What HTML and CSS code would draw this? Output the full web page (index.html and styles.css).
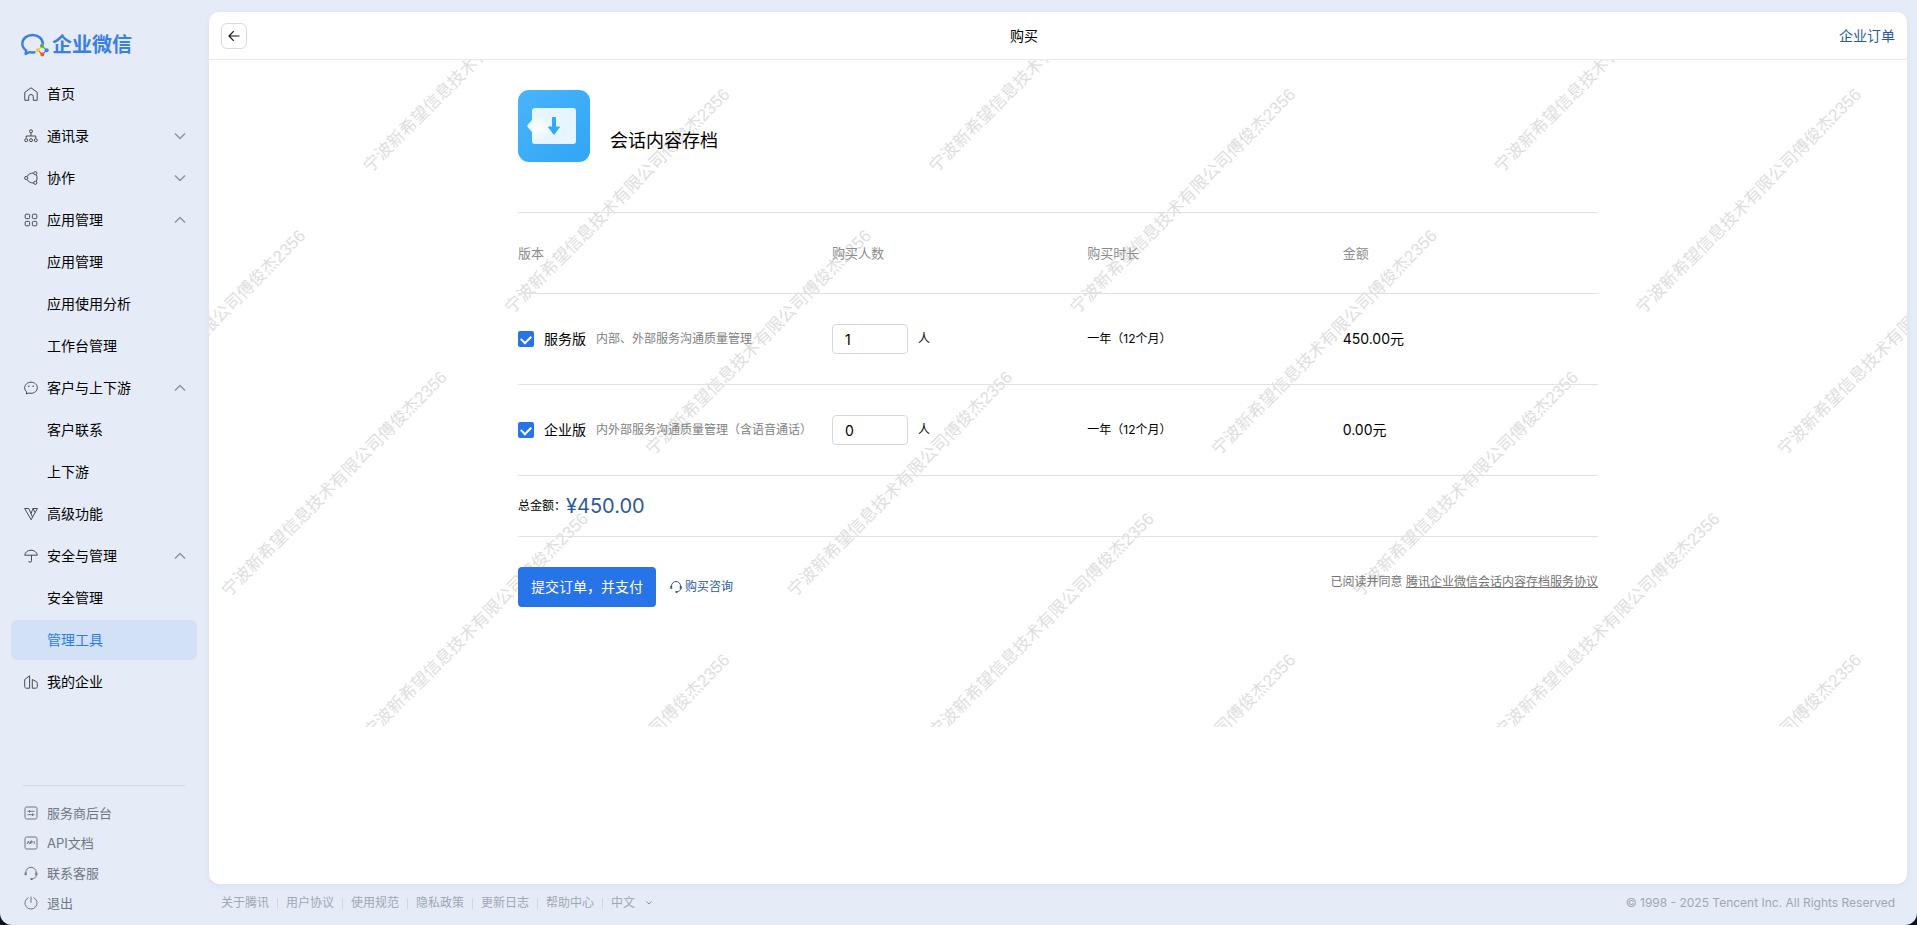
FILE: index.html
```html
<!DOCTYPE html>
<html lang="zh-CN">
<head>
  <meta charset="UTF-8" />
  <meta name="viewport" content="width=device-width, initial-scale=1.0"/>
  <title>企业微信</title>
  <link rel="stylesheet" href="styles.css">
</head>
<body>
  <aside class="sidebar">
    <a class="logo" href="#">
      <svg width="28" height="24" viewBox="0 0 28 24" fill="none">
        <path d="M22 11.5C21.8 5.500 17.200 2 11.500 2 5.800 2 1.300 5.700 1.300 10.600c0 2.900 1.500 5.300 3.900 6.900L4.600 21l3.900-1.900c2.100.5 4.100.5 5.900.1" stroke="#3a7fe6" stroke-width="2.400" stroke-linejoin="round"/>
        <path d="M21 13l4.600 4.200" stroke="#53b13c" stroke-width="1.200"/>
        <path d="M25.600 17.200l-4.200 4.300" stroke="#3a7fe6" stroke-width="1.200"/>
        <path d="M21.400 21.500l-4.400-4.200" stroke="#ec5a29" stroke-width="1.200"/>
        <path d="M17 17.300l4-4.300" stroke="#f6c445" stroke-width="1.200"/>
        <circle cx="21" cy="12.800" r="2" fill="#53b13c"/>
        <circle cx="25.700" cy="17.200" r="2" fill="#3a7fe6"/>
        <circle cx="21.300" cy="21.600" r="2" fill="#ec5a29"/>
        <circle cx="16.800" cy="17.300" r="2" fill="#f6c445"/>
      </svg>
      <span>企业微信</span>
    </a>

    <nav class="menu">
      <a class="menu-item" href="#">
        <svg class="icon" viewBox="0 0 14 14"><path d="M.8 5.300L7 .8l6.200 4.500v8H9.300V9.800a2.300 2.300 0 0 0-4.600 0v3.500H.8z"/></svg>
        首页
      </a>
      <button class="menu-item">
        <svg class="icon" viewBox="0 0 14 14"><circle cx="7" cy="2.300" r="1.500"/><path d="M7 4v3M2.200 9V7h9.600v2"/><circle cx="2.200" cy="11.200" r="1.500"/><circle cx="7" cy="11.200" r="1.500"/><circle cx="11.800" cy="11.200" r="1.500"/></svg>
        通讯录
        <svg class="arrow" viewBox="0 0 12 12"><path d="M1 3.500l5 5 5-5"/></svg>
      </button>
      <button class="menu-item">
        <svg class="icon" viewBox="0 0 14 14"><circle cx="2.200" cy="7" r="1.600"/><circle cx="11.300" cy="2.200" r="1.600"/><circle cx="11.300" cy="11.800" r="1.600"/><path d="M3 5.500C4.300 3.300 6.500 2 9.700 2M3 8.500c1.300 2.200 3.500 3.500 6.700 3.500M12.300 3.600c1 2.200 1 4.600 0 6.800"/></svg>
        协作
        <svg class="arrow" viewBox="0 0 12 12"><path d="M1 3.500l5 5 5-5"/></svg>
      </button>
      <button class="menu-item">
        <svg class="icon" viewBox="0 0 14 14"><rect x="1.200" y="1.200" width="4.400" height="4.400" rx="1"/><rect x="8.400" y="1.200" width="4.400" height="4.400" rx="1"/><rect x="1.200" y="8.400" width="4.400" height="4.400" rx="1"/><rect x="8.400" y="8.400" width="4.400" height="4.400" rx="1"/></svg>
        应用管理
        <svg class="arrow" viewBox="0 0 12 12"><path d="M1 8.500l5-5 5 5"/></svg>
      </button>
      <a class="menu-item sub" href="#">应用管理</a>
      <a class="menu-item sub" href="#">应用使用分析</a>
      <a class="menu-item sub" href="#">工作台管理</a>
      <button class="menu-item">
        <svg class="icon" viewBox="0 0 14 14"><path d="M7 1.200c3.500 0 6.300 2.400 6.300 5.600S10.500 12.300 7 12.300c-.8 0-1.500-.1-2.200-.3L2.400 13l.2-2.200C1.400 9.800.7 8.400.7 6.800.7 3.600 3.500 1.200 7 1.200z"/><circle class="dot" cx="4.800" cy="5.200" r=".8"/><circle class="dot" cx="9.200" cy="5.200" r=".8"/></svg>
        客户与上下游
        <svg class="arrow" viewBox="0 0 12 12"><path d="M1 8.500l5-5 5 5"/></svg>
      </button>
      <a class="menu-item sub" href="#">客户联系</a>
      <a class="menu-item sub" href="#">上下游</a>
      <a class="menu-item" href="#">
        <svg class="icon" viewBox="0 0 14 14"><path d="M.6 1.500h4.200l3.700 8.600-1.300 2.700zM7 6.500l2-5h4.500L8.500 10.100M9 1.500l1.900 4"/></svg>
        高级功能
      </a>
      <button class="menu-item">
        <svg class="icon" viewBox="0 0 14 14"><path d="M.7 6.200C1.200 3.200 3.700 1.200 7 1.200s5.800 2 6.300 5zM7.500 6.200v5.600c0 .9-.6 1.500-1.400 1.500s-1.300-.4-1.300-1.200"/></svg>
        安全与管理
        <svg class="arrow" viewBox="0 0 12 12"><path d="M1 8.500l5-5 5 5"/></svg>
      </button>
      <a class="menu-item sub" href="#">安全管理</a>
      <a class="menu-item sub active" href="#">管理工具</a>
      <a class="menu-item" href="#">
        <svg class="icon" viewBox="0 0 14 14"><path d="M5.600.8v12.400H2.300c-.9 0-1.600-.7-1.600-1.600V4.500zM8.300 4.500l3.600 1.800c.9.400 1.400 1 1.400 2v3.400c0 .9-.6 1.500-1.500 1.500H8.300z"/></svg>
        我的企业
      </a>
    </nav>

    <div class="side-links">
      <a href="#">
        <svg class="icon" viewBox="0 0 14 14"><rect x="1" y="1" width="12" height="12" rx="1.500"/><path d="M3.500 5.300h7M3.500 8.700h7M5.500 4v2.600M8.500 7.400V10"/></svg>
        服务商后台
      </a>
      <a href="#">
        <svg class="icon" viewBox="0 0 14 14"><rect x="1" y="1" width="12" height="12" rx="1.500"/><path d="M3.200 8l1.200-3 1.200 3M6.700 8V5h1.400v1.600H6.700M10.200 5v3"/></svg>
        API文档
      </a>
      <a href="#">
        <svg class="icon" viewBox="0 0 14 14"><path d="M1.800 9V6.500a5.200 5.200 0 0 1 10.400 0V9c0 2.200-1.500 3.700-4.400 3.900"/><path class="thick" d="M1.600 6.500v2.700M12.400 6.500v2.700M6.500 13h2"/></svg>
        联系客服
      </a>
      <a href="#">
        <svg class="icon" viewBox="0 0 14 14"><path d="M4.500 1.600a6 6 0 1 0 5 0M7 .6v6.200"/></svg>
        退出
      </a>
    </div>
  </aside>

  <div class="page">
    <main class="card">
      <header class="card-head">
        <button class="back" aria-label="返回">
          <svg width="12" height="12" viewBox="0 0 12 12"><path d="M11.500 6H1M5.700 1.200L1 6l4.700 4.800"/></svg>
        </button>
        <h1>购买</h1>
        <a href="#">企业订单</a>
      </header>

      <section class="content">
        <div class="watermark" id="watermark" aria-hidden="true"></div>

        <form class="order">
          <div class="app">
            <svg width="72" height="72" viewBox="0 0 72 72">
              <defs>
                <linearGradient id="appBg" x1="0" y1="0" x2="1" y2="1">
                  <stop offset="0" stop-color="#49b4fb"/>
                  <stop offset="1" stop-color="#30a6f5"/>
                </linearGradient>
                <radialGradient id="appGlow" cx="20" cy="38" r="13" gradientUnits="userSpaceOnUse">
                  <stop offset="0" stop-color="#fff"/>
                  <stop offset="1" stop-color="#e6f5fe"/>
                </radialGradient>
              </defs>
              <rect width="72" height="72" rx="11" fill="url(#appBg)"/>
              <path d="M17 18h38a3 3 0 0 1 3 3v30a3 3 0 0 1-3 3H17a3 3 0 0 1-3-3v-9l-4-4.500a2 2 0 0 1 0-3l4-4.500v-9a3 3 0 0 1 3-3z" fill="url(#appGlow)"/>
              <path d="M34.500 27.500h3V37h4L36 44.500 30.500 37h4z" fill="#34aaf6" stroke="#34aaf6" stroke-linejoin="round"/>
            </svg>
            <h2>会话内容存档</h2>
          </div>

          <table class="versions">
            <thead>
              <tr>
                <th class="col-name">版本</th>
                <th>购买人数</th>
                <th>购买时长</th>
                <th>金额</th>
              </tr>
            </thead>
            <tbody>
              <tr>
                <td>
                  <label class="version">
                    <input type="checkbox" checked>
                    <span class="name">服务版</span>
                    <span class="desc">内部、外部服务沟通质量管理</span>
                  </label>
                </td>
                <td><label class="count"><input type="text" value="1"> 人</label></td>
                <td>一年（12个月）</td>
                <td class="price">450.00元</td>
              </tr>
              <tr>
                <td>
                  <label class="version">
                    <input type="checkbox" checked>
                    <span class="name">企业版</span>
                    <span class="desc">内外部服务沟通质量管理（含语音通话）</span>
                  </label>
                </td>
                <td><label class="count"><input type="text" value="0"> 人</label></td>
                <td>一年（12个月）</td>
                <td class="price">0.00元</td>
              </tr>
            </tbody>
          </table>

          <div class="total">总金额：<strong>¥450.00</strong></div>

          <div class="actions">
            <button class="submit" type="button">提交订单，并支付</button>
            <a class="consult" href="#">
              <svg width="12" height="14" viewBox="0 0 12 14"><path d="M1.500 8.500V6a4.500 4.500 0 0 1 9 0v2.500c0 2-1.300 3.200-4 3.400"/><path class="thick" d="M1.200 6v2.800M10.800 6v2.800M5.500 12h1.800"/></svg>
              购买咨询
            </a>
            <p class="agree">已阅读并同意 <a href="#">腾讯企业微信会话内容存档服务协议</a></p>
          </div>
        </form>
      </section>
    </main>

    <footer class="footer">
      <div class="footer-links">
        <a href="#">关于腾讯</a>
        <a href="#">用户协议</a>
        <a href="#">使用规范</a>
        <a href="#">隐私政策</a>
        <a href="#">更新日志</a>
        <a href="#">帮助中心</a>
        <button class="lang">中文 <svg width="6" height="6" viewBox="0 0 6 6"><path d="M.5 1.500L3 4l2.500-2.500"/></svg></button>
      </div>
      <p>© 1998 - 2025 Tencent Inc. All Rights Reserved</p>
    </footer>
  </div>

  <script>
    // Fill the rotated watermark grid, hiding the marks outside the content area
    const watermark = document.getElementById('watermark');
    const area = watermark.parentElement.getBoundingClientRect();
    for (let i = 0; i < 54; i++) {
      const span = document.createElement('span');
      span.textContent = '宁波新希望信息技术有限公司傅俊杰2356';
      watermark.appendChild(span);
    }
    for (const span of watermark.children) {
      const box = span.getBoundingClientRect();
      if (box.right < area.left || box.left > area.right || box.bottom < area.top || box.top > area.bottom) {
        span.textContent = '';
      }
    }
  </script>
</body>
</html>
```
FILE: styles.css
```css
* {
  box-sizing: border-box;
  margin: 0;
  padding: 0;
}
html {
  background: #0b1420;
}
body {
  display: flex;
  min-height: 100vh;
  font-family: Inter, "Noto Sans CJK SC", sans-serif;
  font-size: 14px;
  line-height: 20px;
  color: #000;
  background: #e5ecf8;
  border-radius: 0 0 12px 12px;
}
a {
  color: inherit;
  text-decoration: none;
}
button {
  font: inherit;
  color: inherit;
  background: none;
  border: none;
  cursor: pointer;
}
svg {
  flex: none;
  fill: none;
}

/* Sidebar */
.sidebar {
  width: 209px;
  flex: none;
  display: flex;
  flex-direction: column;
  padding: 30px 12px 7px 11px;
}
.logo {
  display: flex;
  align-items: center;
  gap: 3px;
  height: 30px;
  padding-left: 10px;
  margin-bottom: 14px;
  font-size: 20px;
  font-weight: 600;
  color: #3a7fe6;
}
.menu {
  display: flex;
  flex-direction: column;
  gap: 2px;
}
.menu-item {
  display: flex;
  align-items: center;
  gap: 9px;
  height: 40px;
  padding: 0 11px 0 13px;
  border-radius: 6px;
  text-align: left;
}
.menu-item.sub {
  padding-left: 36px;
}
.menu-item.active {
  background: #d2e1f6;
  color: #2e7bef;
}
.icon {
  width: 14px;
  height: 14px;
  stroke: #454a52;
  stroke-width: 1;
}
.icon .dot {
  fill: #454a52;
  stroke: none;
}
.thick {
  stroke-width: 2;
}
.arrow {
  width: 12px;
  height: 12px;
  margin-left: auto;
  stroke: #8b919c;
  stroke-width: 1.4;
}
.side-links {
  display: flex;
  flex-direction: column;
  margin: auto 12px 0;
  padding-top: 12px;
  border-top: 1px solid #d3dae6;
  font-size: 13px;
  color: #6f7682;
}
.side-links a {
  display: flex;
  align-items: center;
  gap: 9px;
  height: 30px;
  padding-left: 1px;
}
.side-links .icon {
  stroke: #6f7682;
}

/* Main card */
.page {
  flex: 1;
  display: flex;
  flex-direction: column;
  padding: 12px 10px 0 0;
}
.card {
  flex: 1;
  background: #fff;
  border-radius: 10px;
  box-shadow: 0 2px 6px rgba(60, 100, 160, 0.08);
}
.card-head {
  display: flex;
  align-items: center;
  height: 48px;
  padding: 0 12px;
  border-bottom: 1px solid #e8eaed;
}
.card-head h1 {
  flex: 1;
  padding-right: 38px;
  font-size: 14px;
  font-weight: 400;
  text-align: center;
}
.card-head a {
  color: #2b5a9c;
}
.back {
  display: flex;
  align-items: center;
  justify-content: center;
  width: 26px;
  height: 26px;
  border: 1px solid #d8dadd;
  border-radius: 6px;
}
.back svg {
  stroke: #111;
  stroke-width: 1.2;
}
.content {
  position: relative;
  overflow: hidden;
  padding: 30px 0 120px;
}
.watermark {
  position: absolute;
  top: 0;
  left: 0;
  display: grid;
  grid-template-columns: repeat(6, 400px);
  grid-auto-rows: 200px;
  align-items: center;
  justify-items: start;
  font-family: "Liberation Sans", "Noto Sans CJK SC", sans-serif;
  font-size: 17px;
  color: #dedede;
  white-space: nowrap;
  transform-origin: 0 0;
  transform: rotate(-45deg) translate(-766px, -111px);
  pointer-events: none;
}
.order {
  position: relative;
  max-width: 1080px;
  margin: 0 auto;
}

/* Product */
.app {
  display: flex;
  gap: 20px;
  padding-bottom: 50px;
  border-bottom: 1px solid #e0e1e4;
}
.app h2 {
  padding-top: 38px;
  font-size: 18px;
  font-weight: 400;
  line-height: 26px;
}
.versions {
  width: 100%;
  border-collapse: separate;
  border-spacing: 0;
  table-layout: fixed;
  font-size: 12px;
  text-align: left;
}
.versions th {
  height: 81px;
  font-size: 13px;
  font-weight: 400;
  color: #8c8c8c;
  border-bottom: 1px solid #e0e1e4;
}
.versions td {
  height: 91px;
  border-bottom: 1px solid #e0e1e4;
}
.versions .col-name {
  width: 314px;
}
.versions .price {
  font-size: 14px;
}
.version {
  display: flex;
  align-items: center;
  gap: 10px;
}
.version input {
  appearance: none;
  width: 16px;
  height: 16px;
  border-radius: 2px;
  background: #2773e8;
  display: flex;
  align-items: center;
  justify-content: center;
}
.version input:checked::before {
  content: "";
  width: 8px;
  height: 5px;
  margin-bottom: 2px;
  border-left: 2px solid #fff;
  border-bottom: 2px solid #fff;
  transform: rotate(-45deg);
}
.version .name {
  font-size: 14px;
}
.version .desc {
  color: #808080;
}
.count {
  display: flex;
  align-items: center;
  gap: 10px;
}
.count input {
  width: 76px;
  height: 30px;
  padding: 0 12px;
  border: 1px solid #d5d7db;
  border-radius: 4px;
  background: #fff;
  font: inherit;
  font-size: 14px;
}
.total {
  display: flex;
  align-items: center;
  height: 61px;
  border-bottom: 1px solid #e0e1e4;
  font-size: 12px;
}
.total strong {
  font-size: 20px;
  font-weight: 400;
  color: #2b5a9c;
}

/* Actions */
.actions {
  display: flex;
  align-items: center;
  padding-top: 30px;
  font-size: 12px;
}
.submit {
  height: 40px;
  padding: 0 13px;
  border-radius: 4px;
  background: #2773e8;
  color: #fff;
  font-size: 14px;
}
.consult {
  display: flex;
  align-items: center;
  gap: 3px;
  margin-left: 14px;
  color: #2b5a9c;
}
.consult svg {
  stroke: #2b5a9c;
}
.agree {
  align-self: flex-start;
  margin-left: auto;
  line-height: 30px;
  color: #737373;
}
.agree a {
  text-decoration: underline;
}

/* Footer */
.footer {
  display: flex;
  align-items: center;
  justify-content: space-between;
  height: 41px;
  padding: 0 12px 3px;
  font-size: 12px;
  color: #a0a7b3;
}
.footer-links {
  display: flex;
  align-items: center;
}
.footer-links a {
  display: flex;
  align-items: center;
}
.footer-links a::after {
  content: "";
  height: 11px;
  margin: 0 8px;
  border-left: 1px solid #d0d7e3;
}
.lang {
  display: flex;
  align-items: center;
  gap: 11px;
}
.lang svg {
  stroke: #8b919c;
}
```
